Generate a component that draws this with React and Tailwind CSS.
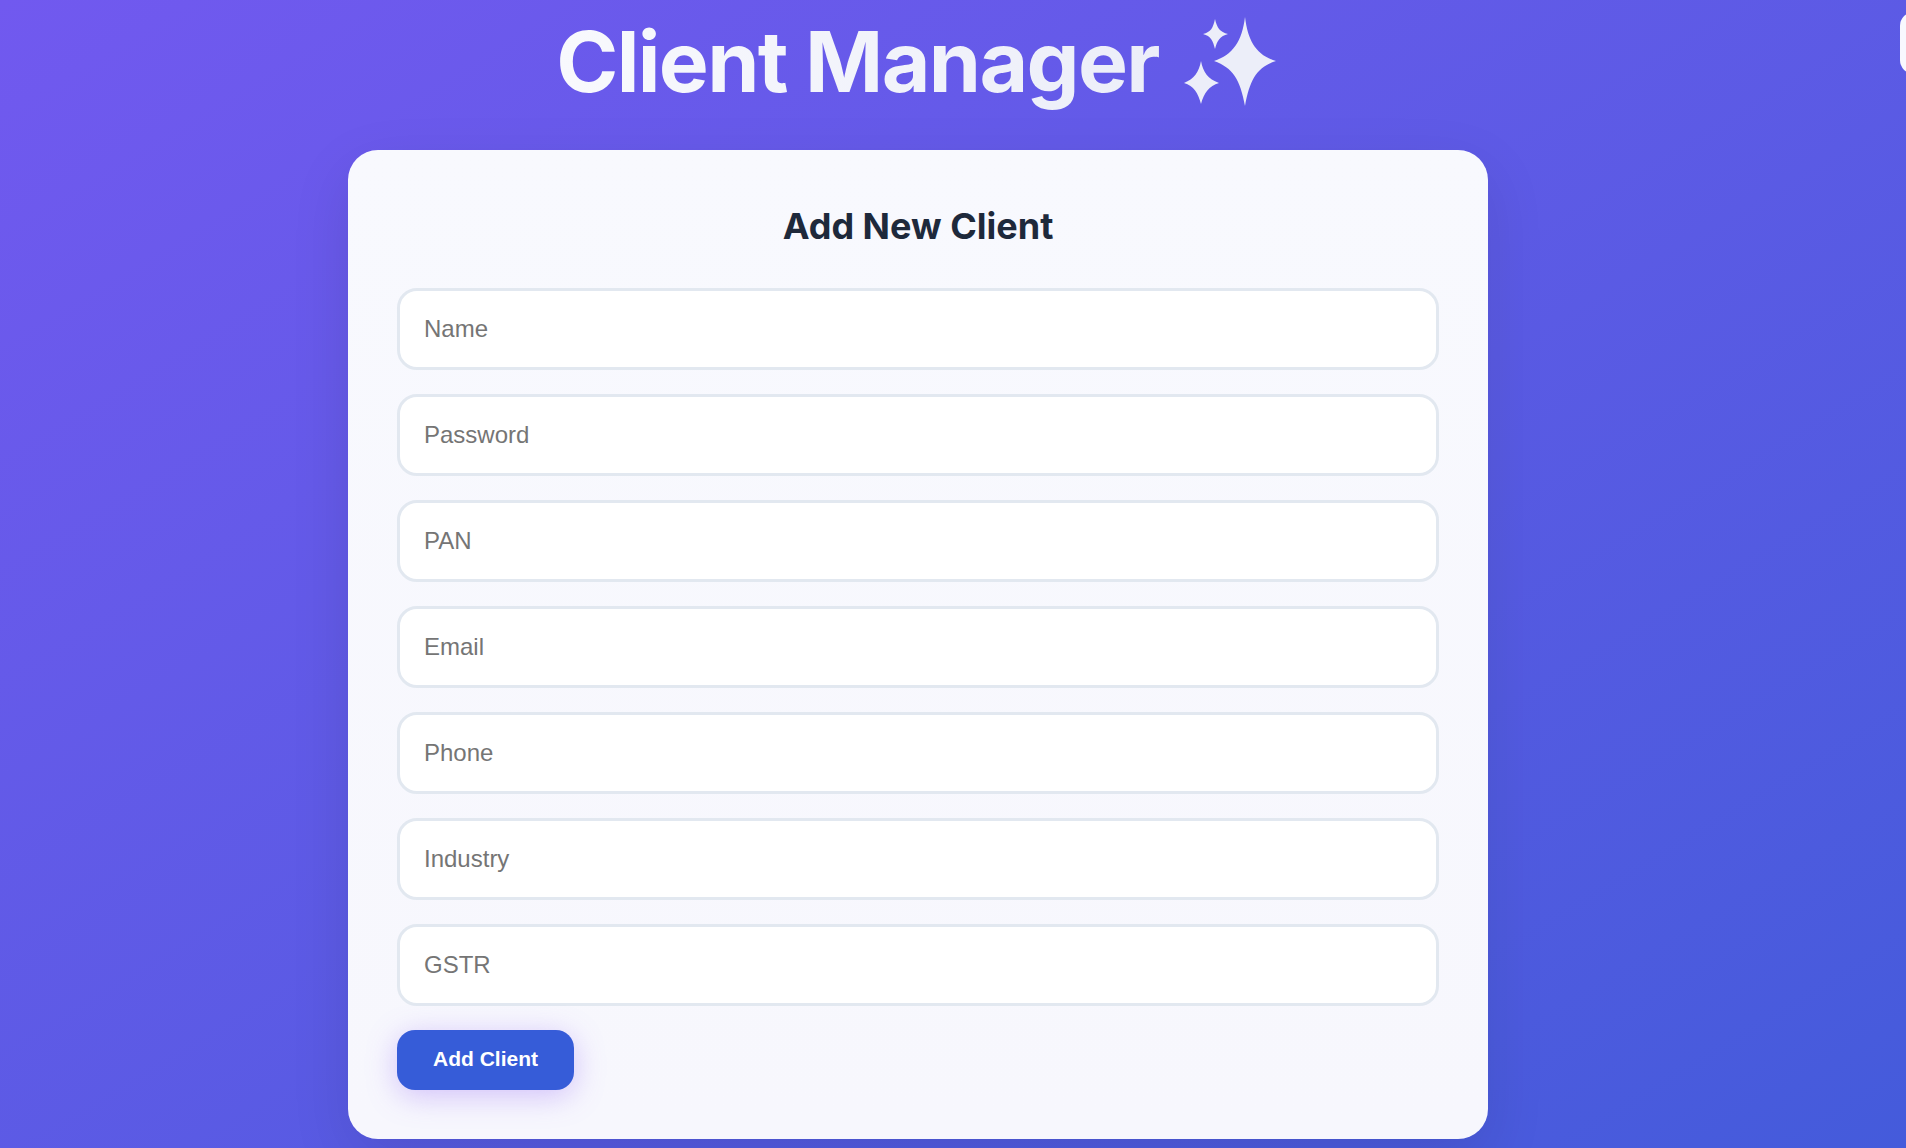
import React from 'react';

const FIELDS = ['Name', 'Password', 'PAN', 'Email', 'Phone', 'Industry', 'GSTR'];

const Sparkles = () => (
  <svg className="w-[92px] h-[90px] ml-[25px] shrink-0" viewBox="0 0 92 90" fill="#eceef9">
    <path d="M61 0 C64 24 72 38 92 44 C73 50 66 62 61 89 C56 62 49 51 30 44 C49 38 58 24 61 0 Z" />
    <path d="M31 2 C33 11 36 15 44 17 C36 19 33 24 31 32 C29 24 27 19 19 17 C27 15 29 11 31 2 Z" />
    <path d="M17 44 C19 55 24 62 35 66 C25 69 20 76 17 87 C14 76 10 69 0 66 C10 62 15 55 17 44 Z" />
  </svg>
);

const App = () => {
  return (
    <div className="relative h-screen overflow-hidden bg-gradient-to-br from-[#7159ef] to-[#445bdb] font-['Inter',sans-serif]">
      <div className="w-[1836px] flex flex-col items-center">
        {/* Header */}
        <div className="h-[150px] flex items-start pt-[11px]">
          <h1 className="flex items-center text-[84px] leading-[102px] font-bold tracking-[-0.02em] mr-[4px]">
            <span className="bg-gradient-to-r from-[#f8f9fd] to-[#eceef9] bg-clip-text text-transparent">Client Manager</span>
            <Sparkles />
          </h1>
        </div>

        {/* Form card */}
        <div className="w-[1140px] h-[989px] rounded-[30px] bg-gradient-to-b from-[#f8f9fe] to-[#f7f7fd] p-[49px] shadow-[0_20px_60px_rgba(0,0,0,0.1)]">
          <h2 className="text-center text-[36px] leading-[54px] font-bold text-[#1e293b] mb-[35px]">Add New Client</h2>
          <form className="flex flex-col gap-[24px]">
            {FIELDS.map((field) => (
              <input
                key={field}
                type="text"
                placeholder={field}
                className="w-full h-[82px] px-[24px] rounded-[20px] border-[3px] border-[#e2e8f0] bg-white text-[24px] font-['Liberation_Sans',sans-serif] placeholder:text-[#757575] outline-none"
              />
            ))}
          </form>
          <button className="mt-[24px] w-[177px] h-[60px] pb-[2px] rounded-[18px] bg-[#365cd8] text-white text-[21px] font-bold font-['Liberation_Sans',sans-serif] shadow-[0_6px_30px_rgba(139,92,246,0.35)]">
            Add Client
          </button>
        </div>
      </div>

      {/* Right edge tab */}
      <div className="absolute top-[12px] left-[1900px] w-[40px] h-[62px] rounded-[14px] bg-[#f8f8fe]" />
    </div>
  );
};

export default App;
